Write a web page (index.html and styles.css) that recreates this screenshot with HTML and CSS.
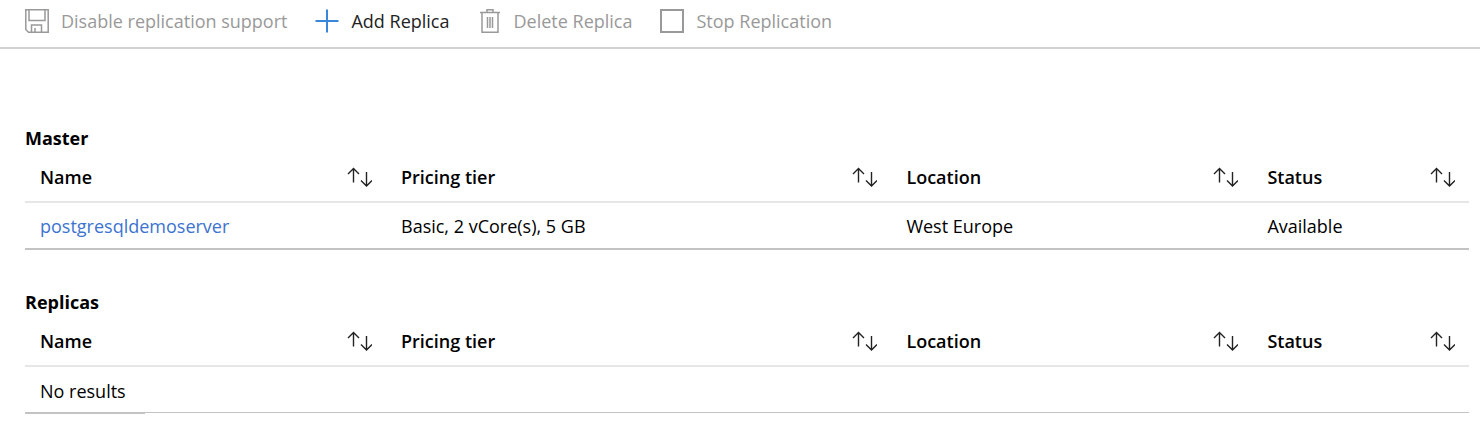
FILE: index.html
```html
<!DOCTYPE html>
<html lang="en">
<head>
  <meta charset="UTF-8"/>
  <meta name="viewport" content="width=device-width, initial-scale=1.0"/>
  <title>Replication</title>
  <link rel="stylesheet" href="styles.css">
</head>
<body>
  <!-- shared sort icon -->
  <svg class="defs" aria-hidden="true">
    <symbol id="sort" viewBox="0 0 25 20">
      <path d="M6.500 15.500V1.500M1 7l5.500-5.500L12 7M19.500 5v14M14 13.500l5.500 5.500 5.500-5.500"/>
    </symbol>
  </svg>

  <div class="toolbar">
    <button type="button" class="cmd cmd-save" disabled>
      <svg class="icon" viewBox="0 0 24 24"><path d="M.8 .8h22.400v22.400H3.500L.8 20.500zM4 1v10.500h16V1M6.500 23v-7h10v7M10 19v4"/></svg>
      <span>Disable replication support</span>
    </button>
    <button type="button" class="cmd cmd-add">
      <svg class="icon" viewBox="0 0 24 24"><path d="M12 .5v23M.5 12h23"/></svg>
      <span>Add Replica</span>
    </button>
    <button type="button" class="cmd cmd-delete" disabled>
      <svg class="icon" viewBox="0 0 24 24"><path d="M2 3.500h20M4 3.500v19.700h16V3.500M9 3.500V.8h6v2.700M9.500 8v11M12 8v11M14.500 8v11"/></svg>
      <span>Delete Replica</span>
    </button>
    <button type="button" class="cmd cmd-stop" disabled>
      <svg class="icon" viewBox="0 0 24 24"><path d="M1 1h22v22H1z"/></svg>
      <span>Stop Replication</span>
    </button>
  </div>

  <div class="container">
    <section>
      <h2 id="master">Master</h2>
      <table aria-labelledby="master">
        <thead>
          <tr>
            <th class="col-name"><button type="button" class="sort">Name <svg><use href="#sort"/></svg></button></th>
            <th class="col-tier"><button type="button" class="sort">Pricing tier <svg><use href="#sort"/></svg></button></th>
            <th class="col-location"><button type="button" class="sort">Location <svg><use href="#sort"/></svg></button></th>
            <th class="col-status"><button type="button" class="sort">Status <svg><use href="#sort"/></svg></button></th>
          </tr>
        </thead>
        <tbody>
          <tr>
            <td><a href="#">postgresqldemoserver</a></td>
            <td>Basic, 2 vCore(s), 5 GB</td>
            <td>West Europe</td>
            <td>Available</td>
          </tr>
        </tbody>
      </table>
    </section>

    <section>
      <h2 id="replicas">Replicas</h2>
      <table aria-labelledby="replicas">
        <thead>
          <tr>
            <th class="col-name"><button type="button" class="sort">Name <svg><use href="#sort"/></svg></button></th>
            <th class="col-tier"><button type="button" class="sort">Pricing tier <svg><use href="#sort"/></svg></button></th>
            <th class="col-location"><button type="button" class="sort">Location <svg><use href="#sort"/></svg></button></th>
            <th class="col-status"><button type="button" class="sort">Status <svg><use href="#sort"/></svg></button></th>
          </tr>
        </thead>
        <tbody>
          <tr><td class="empty" colspan="4">No results</td></tr>
        </tbody>
      </table>
    </section>
  </div>
</body>
</html>
```
FILE: styles.css
```css
* { box-sizing: border-box; margin:0; padding:0; }
body { font-family: "Segoe UI", "Open Sans", "Noto Sans", sans-serif; font-size:18px; line-height:26px; color:#000; background:#fff; }
button { font:inherit; color:inherit; background:none; border:none; cursor:pointer; }
svg { fill:none; stroke:currentColor; flex-shrink:0; }
.defs { display:none; }

/* toolbar */
.toolbar { display:flex; align-items:center; gap:28px; padding:8px 25px 13px; border-bottom:2px solid #d2d2d2; }
.cmd { display:flex; align-items:center; gap:12px; white-space:nowrap; color:#222; }
.cmd:disabled { color:#999; cursor:default; }
.icon { width:24px; height:24px; stroke-width:2; }
.cmd-add .icon { color:#3a86d8; }
.cmd-save .icon, .cmd-delete .icon { stroke-width:1.5; }

/* tables */
.container { padding:76px 11px 0 25px; }
section + section { margin-top:39px; }
h2 { font-size:18px; font-weight:700; margin-bottom:2px; }
table { width:100%; table-layout:fixed; border-collapse:separate; border-spacing:0; }
th, td { text-align:left; padding:0 14px 0 15px; }
th { height:50px; font-weight:600; border-bottom:2px solid #e6e6e6; }
td { height:47px; border-bottom:2px solid #c3c3c3; }
.col-name, .col-location { width:25%; }
.col-tier { width:35%; }
.col-status { width:15%; }
.sort { display:flex; justify-content:space-between; align-items:center; width:100%; }
.sort svg { width:25px; height:20px; color:#222; stroke-width:1.4; }
a { color:#3b73cf; text-decoration:none; }
/* thin line across the row, thicker under the first 120px */
.empty {
  border-bottom:none;
  background:
    linear-gradient(#c3c3c3, #c3c3c3) left 0 bottom 0 / 120px 2px no-repeat,
    linear-gradient(#c3c3c3, #c3c3c3) left 0 bottom 1px / 100% 1px no-repeat;
}
```
